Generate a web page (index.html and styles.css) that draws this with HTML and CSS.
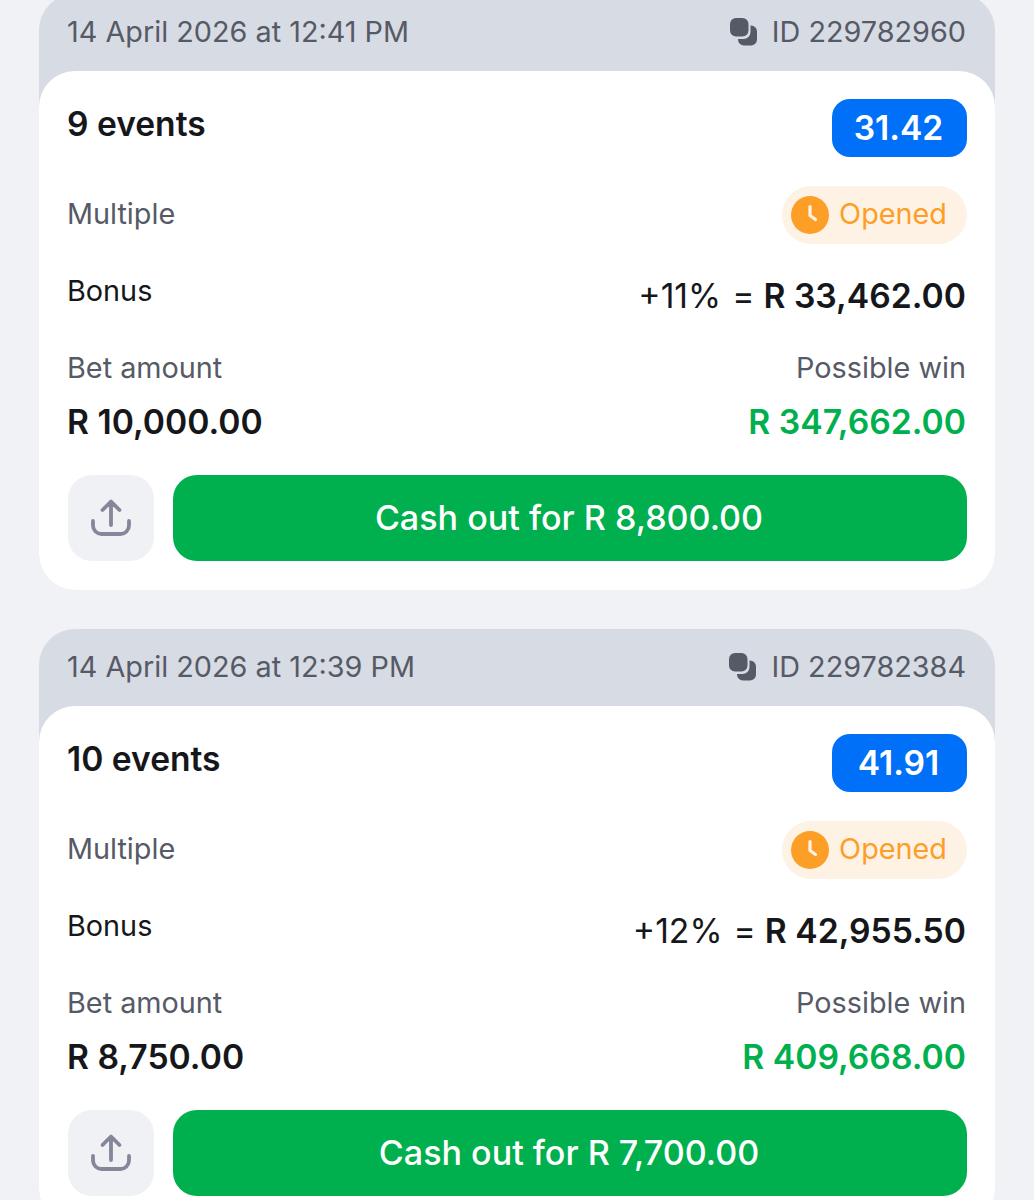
FILE: index.html
```html
<!DOCTYPE html>
<html lang="en">
<head>
<meta charset="utf-8">
<title>Bets</title>
<link rel="stylesheet" href="styles.css">
</head>
<body>
<svg class="defs" width="0" height="0" aria-hidden="true">
  <symbol id="copy" viewBox="0 0 28 28">
    <path d="M20.500 7.500h.5a6 6 0 0 1 6 6v8a6 6 0 0 1-6 6h-7a6 6 0 0 1-6-6v-.5h5.500a7 7 0 0 0 7-7z" fill="currentColor"/>
    <rect x="0" y="0" width="18.500" height="18.500" rx="6" fill="currentColor"/>
  </symbol>
  <symbol id="clock" viewBox="0 0 38 38">
    <circle cx="19" cy="19" r="19" fill="#fd9e27"/>
    <path d="M19 10.500v9l5.500 4" fill="none" stroke="#fff3e5" stroke-width="3.200" stroke-linecap="round" stroke-linejoin="round"/>
  </symbol>
  <symbol id="share" viewBox="0 0 40 40">
    <path d="M20 27V4M11.500 12 20 3.500l8.500 8.500M2 23v4.500A8.500 8.500 0 0 0 10.500 36h19a8.500 8.500 0 0 0 8.500-8.500V23" fill="none" stroke="currentColor" stroke-width="3.800" stroke-linecap="round" stroke-linejoin="round"/>
  </symbol>
</svg>
<main class="list">
  <article class="card">
    <header class="card-head">
      <span>14 April 2026 at 12:41 PM</span>
      <span class="bet-id"><svg class="copy-icon"><use href="#copy"/></svg>ID 229782960</span>
    </header>
    <div class="card-body">
      <div class="row row-top">
        <h2 class="title">9 events</h2>
        <span class="odds">31.42</span>
      </div>
      <div class="row row-status">
        <span class="muted">Multiple</span>
        <span class="status"><svg class="clock-icon"><use href="#clock"/></svg>Opened</span>
      </div>
      <div class="row row-bonus">
        <span class="bonus-label">Bonus</span>
        <span class="bonus-value"><span class="pct">+11%</span><span class="eq">=</span><b>R 33,462.00</b></span>
      </div>
      <div class="row row-labels">
        <span class="muted">Bet amount</span>
        <span class="muted">Possible win</span>
      </div>
      <div class="row row-amounts">
        <b class="amount">R 10,000.00</b>
        <b class="amount win">R 347,662.00</b>
      </div>
      <div class="actions">
        <button class="share" type="button" aria-label="Share"><svg class="share-icon"><use href="#share"/></svg></button>
        <button class="cashout" type="button">Cash out for R 8,800.00</button>
      </div>
    </div>
  </article>
  <article class="card">
    <header class="card-head">
      <span>14 April 2026 at 12:39 PM</span>
      <span class="bet-id"><svg class="copy-icon"><use href="#copy"/></svg>ID 229782384</span>
    </header>
    <div class="card-body">
      <div class="row row-top">
        <h2 class="title">10 events</h2>
        <span class="odds">41.91</span>
      </div>
      <div class="row row-status">
        <span class="muted">Multiple</span>
        <span class="status"><svg class="clock-icon"><use href="#clock"/></svg>Opened</span>
      </div>
      <div class="row row-bonus">
        <span class="bonus-label">Bonus</span>
        <span class="bonus-value"><span class="pct">+12%</span><span class="eq">=</span><b>R 42,955.50</b></span>
      </div>
      <div class="row row-labels">
        <span class="muted">Bet amount</span>
        <span class="muted">Possible win</span>
      </div>
      <div class="row row-amounts">
        <b class="amount">R 8,750.00</b>
        <b class="amount win">R 409,668.00</b>
      </div>
      <div class="actions">
        <button class="share" type="button" aria-label="Share"><svg class="share-icon"><use href="#share"/></svg></button>
        <button class="cashout" type="button">Cash out for R 7,700.00</button>
      </div>
    </div>
  </article>
</main>
</body>
</html>
```
FILE: styles.css
```css
* { box-sizing: border-box; }
html, body { margin: 0; height: 1200px; overflow: hidden; }
body {
  background: #f0f2f6;
  font-family: Inter, "Liberation Sans", sans-serif;
  color: #16171b;
}
.defs { position: absolute; }
.list {
  display: flex;
  flex-direction: column;
  gap: 39px;
  margin-top: -6px;
  padding: 0 39px;
}
.card {
  background: #d7dbe3;
  border-radius: 36px;
}
.card-head {
  height: 77px;
  padding: 0 29px 2px 28px;
  display: flex;
  align-items: center;
  justify-content: space-between;
  font-size: 28.8px;
  color: #565a66;
}
.bet-id { display: flex; align-items: center; gap: 14px; }
.copy-icon { width: 28px; height: 28px; }
.card-body {
  background: #fff;
  border-radius: 36px;
  padding: 28px 28px 29px 29px;
  display: flex;
  flex-direction: column;
}
.row {
  display: flex;
  justify-content: space-between;
}
.row-top { height: 58px; }
.title {
  margin: 0 0 0 -1px;
  font-size: 33.6px;
  line-height: 50px;
  font-weight: 600;
}
.odds {
  width: 135px;
  height: 58px;
  border-radius: 18px;
  background: #0070f9;
  color: #fff;
  font-size: 33.6px;
  font-weight: 600;
  display: flex;
  align-items: center;
  justify-content: center;
  padding: 0 2px 2px 0;
}
.row-status {
  margin-top: 29px;
  height: 58px;
  align-items: center;
}
.muted { font-size: 28.8px; color: #565a66; line-height: 34px; margin-left: -1px; }
.row-status .muted { margin-bottom: 2px; }
.row-labels .muted:last-child { margin-right: 1px; }
.status {
  height: 58px;
  border-radius: 29px;
  background: #fef2e5;
  color: #fd9e27;
  font-size: 28.8px;
  display: flex;
  align-items: center;
  gap: 10px;
  padding: 0 20px 3px 9px;
}
.clock-icon { width: 38px; height: 38px; margin-bottom: -3px; }
.row-bonus { margin-top: 24px; height: 58px; }
.bonus-label { font-size: 28.8px; line-height: 46px; margin-left: -1px; }
.bonus-value {
  font-size: 33.7px;
  line-height: 56px;
  display: flex;
  gap: 10px;
  margin-right: 1px;
}
.bonus-value b { font-weight: 600; }
.eq { margin: 0 -1px 0 1px; }
.row-labels { margin-top: 25px; }
.row-amounts { margin-top: 14px; height: 44px; align-items: center; }
.amount { font-size: 33.7px; font-weight: 600; margin-left: -1px; }
.win { margin-right: 1px; color: #00b04e; }
.actions {
  margin-top: 32px;
  display: flex;
  gap: 19px;
}
.share {
  width: 86px;
  height: 86px;
  border: 0;
  border-radius: 24px;
  background: #f0f1f5;
  color: #84869a;
  padding: 0;
  display: flex;
  align-items: center;
  justify-content: center;
}
.share-icon { width: 40px; height: 40px; }
.cashout {
  flex: 1;
  height: 86px;
  border: 0;
  border-radius: 24px;
  background: #00b04e;
  color: #fff;
  font-family: inherit;
  font-size: 34.1px;
  font-weight: 500;
  padding: 0 2px 2px 0;
}
```
